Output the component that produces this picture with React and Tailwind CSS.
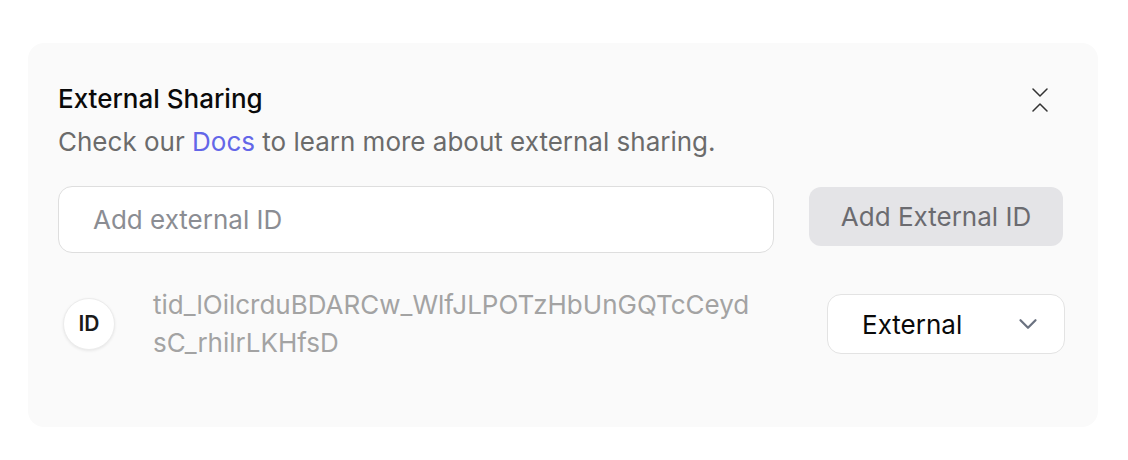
import React from "react";

export default function App() {
  return (
    <div className="min-h-[460px] w-[1128px] bg-white pt-[43px] pl-[28px]" style={{ fontFamily: "Inter, 'Noto Sans', sans-serif" }}>
      <div className="w-[1070px] h-[384px] rounded-[16px] bg-[#fafafa] pt-[40px] pl-[30px] pr-[35px]">
        <div className="flex items-start justify-between">
          <div>
            <div className="text-[26px] leading-[32px] font-medium text-[#0a0a0a]">External Sharing</div>
            <div className="mt-[9px] text-[26px] leading-[36px] text-[#6b6b6b]">
              Check our <span className="text-[#6366e8]">Docs</span> to learn more about external sharing.
            </div>
          </div>
          <button className="mt-[5px] mr-[15px] w-[16px] h-[24px]">
            <svg width="16" height="24" viewBox="0 0 16 24" fill="none" stroke="#333333" strokeWidth="1.5" strokeLinecap="round" strokeLinejoin="round">
              <path d="M1 1 L8 8 L15 1" />
              <path d="M1 23 L8 16 L15 23" />
            </svg>
          </button>
        </div>

        <div className="mt-[26px] flex items-start gap-[35px]">
          <input
            className="w-[716px] h-[67px] rounded-[14px] border border-[#dedede] bg-white pl-[34px] text-[26px] text-[#0a0a0a] placeholder:text-[#8b8d93] outline-none"
            placeholder="Add external ID"
          />
          <button className="mt-[1px] w-[254px] h-[59px] rounded-[12px] bg-[#e4e4e7] text-[26px] text-[#6b6b70]">
            Add External ID
          </button>
        </div>

        <div className="mt-[33px] flex items-center">
          <div className="ml-[5px] w-[52px] h-[52px] rounded-full bg-white border border-[#ececec] shadow-[0_1px_3px_rgba(0,0,0,0.08)] flex items-center justify-center text-[21px] font-semibold text-[#1a1a1a]">
            ID
          </div>
          <div className="ml-[38px] w-[620px] text-[26px] leading-[38px] text-[#a3a3a3]">
            <div>tid_lOilcrduBDARCw_WlfJLPOTzHbUnGQTcCeyd</div>
            <div>sC_rhilrLKHfsD</div>
          </div>
          <div className="ml-auto mr-[-2px] w-[238px] h-[60px] rounded-[14px] border border-[#e3e3e3] bg-white flex items-center justify-between pl-[34px] pr-[21px]">
            <span className="text-[26px] text-[#0a0a0a]">External</span>
            <svg width="30" height="30" viewBox="0 0 24 24" fill="none" stroke="#6b7280" strokeWidth="1.8" strokeLinecap="round" strokeLinejoin="round">
              <path d="m6 9 6 6 6-6" />
            </svg>
          </div>
        </div>
      </div>
    </div>
  );
}
